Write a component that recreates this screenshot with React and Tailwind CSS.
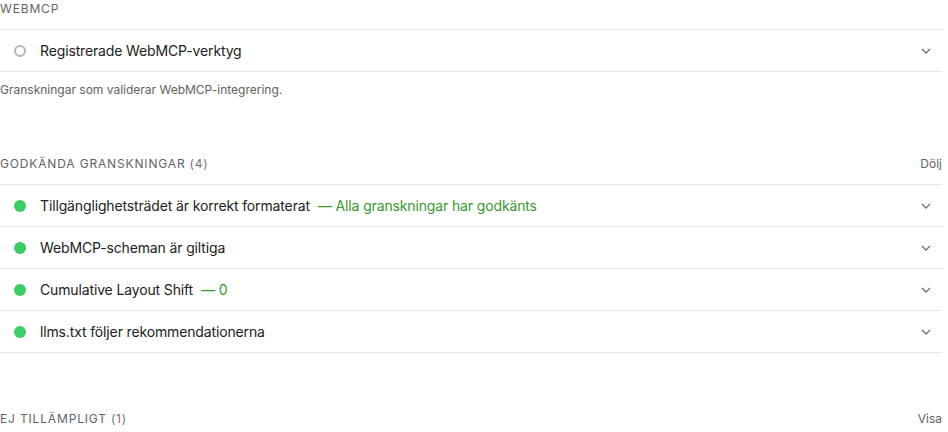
const passed = [
  { title: "Tillgänglighetsträdet är korrekt formaterat", value: "Alla granskningar har godkänts" },
  { title: "WebMCP-scheman är giltiga" },
  { title: "Cumulative Layout Shift", value: "0" },
  { title: "llms.txt följer rekommendationerna" },
];

function Chevron() {
  return (
    <svg width="10" height="6" viewBox="0 0 10 6" className="text-[#707070]">
      <path d="M1 1l4 4 4-4" fill="none" stroke="currentColor" strokeWidth="1.3" />
    </svg>
  );
}

function AuditRow({ title, value, pass }) {
  return (
    <div className="h-[42px] flex items-center border-b border-[#e8e8e8]">
      <div className="w-10 flex justify-center shrink-0">
        {pass ? (
          <span className="w-3 h-3 rounded-full bg-[#3ccd64]" />
        ) : (
          <span className="w-3 h-3 rounded-full border-2 border-[#b5b5b5]" />
        )}
      </div>
      <div className="flex-1 text-[14px] tracking-[-0.01em] text-[#212121]">
        {title}
        {value && <span className="ml-2 text-[#36992f]">— {value}</span>}
      </div>
      <div className="w-7 flex justify-center mr-[2px]">
        <Chevron />
      </div>
    </div>
  );
}

function GroupHeader({ label, count, action }) {
  return (
    <div className="h-[29px] flex items-start justify-between border-b border-[#e8e8e8] text-[12px] leading-4 text-[#5f6368]">
      <span className="tracking-[0.07em] uppercase">
        {label}
        {count && <span className="ml-1 text-[#757575]">({count})</span>}
      </span>
      {action && <span className="text-[#5f6368]">{action}</span>}
    </div>
  );
}

export default function App() {
  return (
    <div className="w-[942px] bg-white font-['Inter','Liberation_Sans',sans-serif] overflow-hidden h-[432px]">
      {/* WebMCP */}
      <div className="pt-[1px]">
        <GroupHeader label="WebMCP" />
        <AuditRow title="Registrerade WebMCP-verktyg" />
        <p className="mt-[10px] text-[12px] leading-4 text-[#616161]">
          Granskningar som validerar WebMCP-integrering.
        </p>
      </div>

      {/* Passed */}
      <div className="mt-[58px]">
        <GroupHeader label="Godkända granskningar" count="4" action="Dölj" />
        {passed.map((a) => (
          <AuditRow key={a.title} title={a.title} value={a.value} pass />
        ))}
      </div>

      {/* Not applicable */}
      <div className="mt-[58px]">
        <GroupHeader label="Ej tillämpligt" count="1" action="Visa" />
      </div>
    </div>
  );
}
